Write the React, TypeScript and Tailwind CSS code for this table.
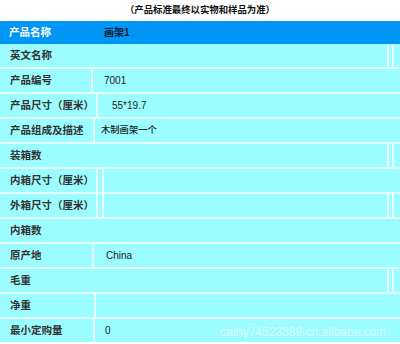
import React from 'react';

type Cell = { w?: string; text?: string; pad?: string; cjk?: boolean };

// each row is a list of cells; the first one holds the label
const rows: Cell[][] = [
  [{ text: '英文名称' }, { w: 'w-[3px] flex-none' }, { w: 'w-[6px] flex-none' }],
  [{ w: 'w-[91px] flex-none', text: '产品编号' }, { text: '7001', pad: 'pl-[11px]' }],
  [{ w: 'w-[96px] flex-none', text: '产品尺寸（厘米）' }, { text: '55*19.7', pad: 'pl-[14px]' }],
  [{ w: 'w-[93px] flex-none', text: '产品组成及描述' }, { text: '木制画架一个', pad: 'pl-[6px]', cjk: true }],
  [{ text: '装箱数' }, { w: 'w-[3px] flex-none' }, { w: 'w-[6px] flex-none' }],
  [{ w: 'w-[96px] flex-none', text: '内箱尺寸（厘米）' }, { w: 'w-[4px] flex-none' }, {}],
  [{ w: 'w-[96px] flex-none', text: '外箱尺寸（厘米）' }, { w: 'w-[4px] flex-none' }, {}, { w: 'w-[3px] flex-none' }, { w: 'w-[6px] flex-none' }],
  [{ text: '内箱数' }],
  [{ w: 'w-[92px] flex-none', text: '原产地' }, { text: 'China', pad: 'pl-[12px]' }],
  [{ text: '毛重' }, { w: 'w-[3px] flex-none' }, { w: 'w-[6px] flex-none' }],
  [{ w: 'w-[94px] flex-none', text: '净重' }, {}],
  [{ w: 'w-[93px] flex-none', text: '最小定购量' }, { text: '0', pad: 'pl-[10px]' }],
];

function Row({ cells }: { cells: Cell[] }) {
  return (
    <div className="flex h-[23px] gap-[2px]">
      {cells.map((c, i) => (
        <div
          key={i}
          className={`${c.w ?? 'flex-1'} bg-[#9bfdff] flex items-center ${
            i === 0 ? 'pl-[10px] text-[10.5px] font-semibold text-[#333]' : `${c.pad ?? ''} ${c.cjk ? 'text-[9.3px] font-medium' : 'text-[10px]'} text-[#222]`
          } whitespace-nowrap overflow-hidden`}
        >
          {c.text}
        </div>
      ))}
    </div>
  );
}

export default function App() {
  return (
    <div className="relative w-[400px] h-[344px] overflow-hidden bg-white font-['Liberation_Sans','Noto_Sans_CJK_SC',sans-serif]">
      <div className="h-[21px] flex items-center justify-center text-[9.4px] font-semibold text-[#111]">
        （产品标准最终以实物和样品为准）
      </div>

      {/* header */}
      <div className="h-[23px] bg-[#0096f5] flex items-center">
        <div className="w-[94px] pl-[9px] text-[10.5px] font-semibold text-white">产品名称</div>
        <div className="pl-[10px] text-[10px] font-bold text-[#0b1a3a]">画架1</div>
      </div>

      <div className="flex flex-col gap-[2px] bg-[#e6ffff]">
        {rows.map((r, i) => (
          <Row key={i} cells={r} />
        ))}
      </div>

      <div className="absolute left-[220px] top-[323px] text-[12px] text-white/60 font-['Liberation_Sans',sans-serif]">
        cathy74523389.cn.alibaba.com
      </div>
    </div>
  );
}
